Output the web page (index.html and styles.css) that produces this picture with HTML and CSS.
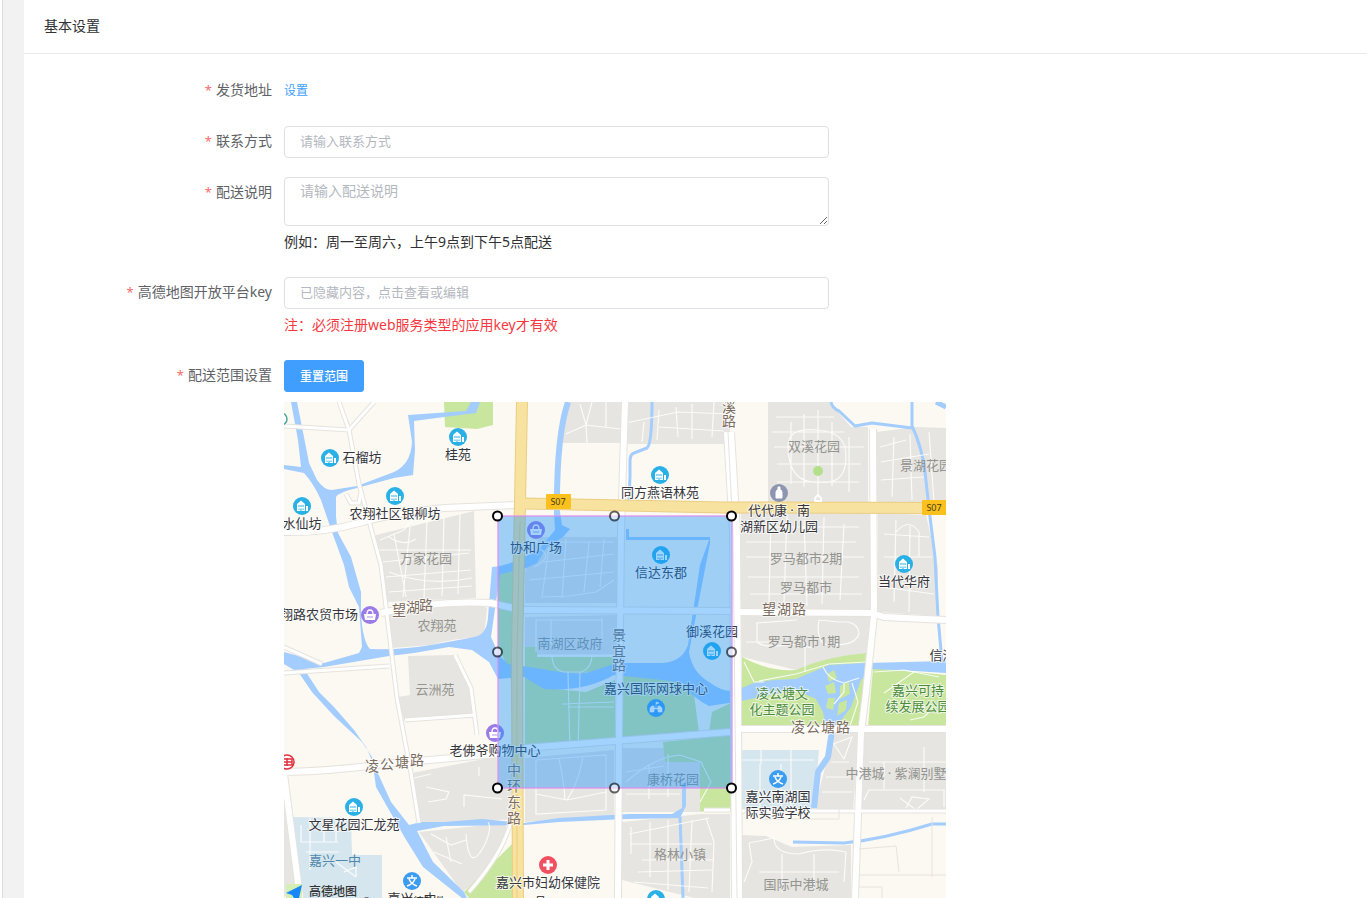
FILE: index.html
```html
<!DOCTYPE html>
<html lang="zh-CN">
    <head>
        <meta charset="utf-8">
        <meta name="viewport" content="width=device-width, initial-scale=1.0">
        <title>基本设置</title>
        <link rel="stylesheet" href="styles.css">
    </head>
    <body>
        <main class="card">
            <h1 class="card-header">基本设置</h1>
            <form class="form">
                <div class="form-item">
                    <span class="label" id="addr">发货地址</span>
                    <div class="content"><a class="link" href="#" aria-describedby="addr">设置</a></div>
                </div>
                <div class="form-item">
                    <label class="label" for="contact">联系方式</label>
                    <div class="content"><input class="input" id="contact" type="text" placeholder="请输入联系方式"></div>
                </div>
                <div class="form-item">
                    <label class="label" for="desc">配送说明</label>
                    <div class="content">
                        <textarea class="input textarea" id="desc" placeholder="请输入配送说明"></textarea>
                        <div class="tip">例如：周一至周六，上午9点到下午5点配送</div>
                    </div>
                </div>
                <div class="form-item">
                    <label class="label" for="key">高德地图开放平台key</label>
                    <div class="content">
                        <input class="input" id="key" type="text" placeholder="已隐藏内容，点击查看或编辑">
                        <div class="tip warn">注：必须注册web服务类型的应用key才有效</div>
                    </div>
                </div>
                <div class="form-item">
                    <label class="label" for="reset">配送范围设置</label>
                    <div class="content">
                        <button class="btn" id="reset" type="button">重置范围</button>
                        <div class="map">
<svg class="map-svg" viewBox="0 0 662 496" preserveAspectRatio="xMinYMin slice">
    <defs>
        <g id="house">
            <circle r="9" fill="#29b0e6"/>
            <path d="M-5 5V-2L-1-5.500L3-2V5ZM4 5V0H6V5Z" fill="#fff"/>
            <path d="M-3-1V1M-1-1V1M1-1V1M-3 2.500V4M-1 2.500V5M1 2.500V4" stroke="#29b0e6"/>
        </g>
        <g id="shop">
            <circle r="9" fill="#9b7be6"/>
            <path d="M-6-1H6L5 5H-5Z" fill="#fff"/>
            <path d="M-3-1Q-3-5 0-5Q3-5 3-1" fill="none" stroke="#fff" stroke-width="1.3"/>
            <path d="M-2 1V3M0 1V3M2 1V3" stroke="#9b7be6" stroke-width=".8"/>
        </g>
        <g id="school">
            <circle r="9" fill="#3c9cf0"/>
            <path d="M0-6V-3M-5-3H5M-3-2Q-1 3 5 5M3-2Q1 3-5 5" fill="none" stroke="#fff" stroke-width="1.5"/>
        </g>
    </defs>

    <!-- 小区 -->
    <g fill="#e6e5e1">
        <path d="M88 134L190 109L192 196L103 200Z"/>
        <path d="M103 213L150 203L192 200L203 206L200 235Q170 236 147 243L108 246Z"/>
        <path d="M124 254L170 253L182 276L192 311L120 319L114 295L126 293Z"/>
        <path d="M128 371L200 357L228 353V417L160 422L137 421Z"/>
        <path d="M135 430L222 421V440L205 470L178 490Z"/>
        <path d="M0 378L12 440L16 480L0 496Z"/>
        <path d="M284 0H338V41H278Z"/>
        <path d="M342 0H446V42H342Z"/>
        <path d="M256 135H333V201H241V170Z"/>
        <path d="M241 215L333 213V253H241Z"/>
        <path d="M241 356L330 348V414L241 420Z"/>
        <path d="M338 346H446V410H338Z"/>
        <path d="M338 420L417 412H446V496H410L338 478Z"/>
        <path d="M484 0H545L567 25H584V102H484Z"/>
        <path d="M592 30L632 25L662 26V101H592Z"/>
        <path d="M457 111H587V209H457Z"/>
        <path d="M594 111L642 113L654 165V214L594 210Z"/>
        <path d="M457 213H587L582 251L555 255L512 268L458 255Z"/>
        <path d="M550 331H575L569 408H530Z"/>
        <path d="M580 331H662V408H575Z"/>
        <path d="M458 433L482 434L508 445L567 443V496H458Z"/>
    </g>
    <!-- 学校 -->
    <g fill="#d6e6ee">
        <path d="M9 415L67 416L68 453H98V496H18Z"/>
        <path d="M458 348H535L530 408H458Z"/>
    </g>
    <!-- 绿地 -->
    <g fill="#c8e69d">
        <path d="M160 0H209V23L193 27L161 25Z"/>
        <path d="M214 170L229 163V270L222 262L214 243Z"/>
        <path d="M241 245H253V255H330V265L300 271H241Z"/>
        <path d="M241 275L260 286L302 290L331 278V339L241 349Z"/>
        <path d="M339 273Q370 271 393 280L410 292L415 331L339 335Z"/>
        <path d="M425 330L428 310L447 301V328Z"/>
        <path d="M379 340L447 333V409H416V360L381 360Z"/>
        <path d="M230 440L180 490L185 496H230Z"/>
        <path d="M458 255Q485 270 512 268Q540 255 582 251L577 325H458Z"/>
        <path d="M589 266L662 273V325H584Z"/>
    </g>
    <!-- 河流 -->
    <g fill="#a3ccff">
        <path d="M7 0H13L20 35L25 61L33 78Q40 88 48 88L73 84L110 70Q127 62 128 40L124 13L182 9L187 0H196L192 11L160 15L130 19L131 48L129 73L110 76L73 86Q55 90 52 95V115L54 131L67 155L77 190V213Q79 240 86 247Q120 248 147 243Q175 238 190 235Q203 233 204 215L208 165Q225 164 236 156L253 150L271 128L270 110H276L278 123L286 127L279 135L263 145L253 161L240 167L216 172L207 235L215 253L224 262Q245 265 258 267Q280 272 302 271L333 261H378Q398 260 404 243L416 163L425 138H342V127H345V135H426L426 141L405 250Q408 270 425 280Q438 290 450 289L470 281L490 278L512 277L545 263L582 261L662 259V271L630 269L589 267L577 278L567 305L552 325H542L539 310L532 297L512 288L485 293L458 299L425 304Q410 297 398 281L378 278L330 273Q300 290 260 287L240 275L214 277L205 260L188 248L165 245L130 251L105 254L40 265L20 267L35 290L50 305L70 328L82 345L97 378L107 400L125 423L137 420L160 420L198 417L240 421L275 416L345 412L388 412L398 406V382L402 380V404L396 416L342 417L275 420L240 423L160 424L133 429L149 460L180 490L183 496H178L139 465L121 436L92 385L88 355L78 340L50 314L28 290L15 271L0 262V250L40 261L75 251L78 245L75 205L65 185L60 163L48 130L37 98Q30 82 20 71L0 67V63L17 65L14 38Z"/>
    </g>
    <g fill="none" stroke="#a3ccff" stroke-linejoin="round">
        <path d="M284 0Q272 35 273 115" stroke-width="6"/>
        <path d="M368 0Q368 42 363 46L350 51Q346 52 346 60V75L345 98" stroke-width="3"/>
        <path d="M547 0Q548 6 555 9L571 24L588 21L628 26" stroke-width="3"/>
        <path d="M628 0V24Q638 45 641 70L646 115L651 155L654 215L658 260" stroke-width="3"/>
        <path d="M548 329L544 355L534 370L530 406" stroke-width="6"/>
        <path d="M509 440L560 441Q600 437 648 422L662 422" stroke-width="3"/>
        <path d="M396 415L399 496" stroke-width="3"/>
        <path d="M652 0L662 5" stroke-width="5"/>
    </g>
    <g fill="#c8e69d">
        <path d="M543 272L550 268L553 276L545 280ZM541 284L550 280L552 291L544 292ZM556 284L565 279L566 292L556 297ZM544 296L551 296L549 308L542 306ZM555 301L563 298L562 308L553 314Z"/>
    </g>
    <!-- 小区内部道路 -->
    <g fill="none" stroke="#fff" stroke-width="1.2" opacity=".85">
        <path d="M96 138L120 128L133 112M94 148H187M99 160L185 151M102 175L187 168M105 190L188 184M110 132L122 195M126 125L119 195M143 118L140 196M160 115L158 194M176 111L174 192M105 135Q120 145 132 137M105 170Q145 185 188 176"/>
        <path d="M308 0L302 23L282 32M296 2L302 23L337 27M302 23L303 41M322 0V25M342 21L394 10L446 12M360 20L358 40M375 8L373 38M392 5L394 35M408 2V37M430 0L428 35M375 25L440 29"/>
        <path d="M250 165Q270 155 256 147M258 140H330M260 160L330 152M245 178L330 170M258 195L265 145M278 196L282 137M300 190L305 140M316 185L320 137M258 195L285 194L312 190L330 178"/>
        <path d="M252 250V218H318M267 218V242M318 216V240M254 253H330M268 253Q268 268 280 270H298Q308 265 308 253M284 270L286 349M296 270L294 349M278 302L330 300M284 305H330"/>
        <path d="M252 358L322 353V408L252 412V358M275 357Q280 380 281 398M299 354Q295 380 283 398M252 392L283 398L322 390M342 380Q370 355 396 353L417 360L427 380L416 400M342 392H396M365 362V397M384 352V395M342 370L380 364"/>
        <path d="M345 432L425 416M346 442H428M358 458H430M354 470L428 468M350 480L424 486M347 425V452M366 420V475M384 418V488M408 418L405 490M422 416L430 440L428 490"/>
        <path d="M492 15H550M488 30H560M490 45H580M493 62H577M493 80H575M507 20V82M520 12V85M534 8V90M548 20V84M565 35V90M504 45Q503 25 534 28Q563 30 562 55Q562 84 534 80Q505 82 504 45M534 80V96M596 45L622 38M597 60L645 52M597 78L640 75M610 35L608 95M626 32L628 98M645 30L650 100"/>
        <path d="M464 125H575M462 140H572M462 155H580M464 175H575M466 192H578M487 115L485 200M503 112L500 200M520 118L523 204M540 115L538 202M560 122L556 198M465 130L490 118M600 132L645 135M600 155H648M598 185L650 192M612 118L610 200M626 124L625 210M612 130Q625 115 635 130V155"/>
        <path d="M462 240H488M472 221L513 218M473 221V240Q480 247 510 242L528 246M521 245V270M535 218L555 220Q574 218 575 232Q570 246 540 242Q532 235 535 218M460 260L470 280L480 280M475 279L512 272L545 262L582 260M539 265Q545 278 560 281L575 276M568 281L574 300L566 324M550 302L560 290L560 281M590 270L620 268L655 275M626 318L640 315L645 310M600 291L630 270"/>
        <path d="M549 342L568 335L560 357L550 342M547 360H565M542 375H568M538 390H568M585 360H662M580 398L585 388H660V405M622 406L628 395L645 397L632 408L616 396M600 360V387M640 345V390M458 358H530M477 348V362M507 348V405M476 362V408M497 362V408"/>
        <path d="M17 423V440H54M26 416V468M40 416V440M52 418V440M22 450H55M52 460L72 475M60 470L72 465V475M130 376L147 372M142 385L165 390L162 397L144 400M180 405V393L218 397M195 374V365M147 432L167 443L182 438M150 450L178 462M162 435L167 460M182 432Q185 475 202 440Q208 425 204 420M465 441L490 436Q490 452 515 452Q540 445 562 450L560 480M465 441L468 460L460 480M475 470H555M498 452V490M530 452V490"/>
    </g>

    <!-- 主要道路 -->
    <g fill="none" stroke="#e6e3de">
        <path stroke-width="5" d="M55 0L65 28L75 82L97 163L103 213L113 296L127 371L135 421M0 24L65 28L90 0M0 271L105 264M171 253L187 286L193 333M121 318L192 313M230 405Q225 445 185 490M0 245L38 262M62 92L67 101H75L77 90M458 409H662M446 408H420"/>
        <path stroke-width="8" d="M0 130Q40 131 75 121T160 106L233 103M97 211Q150 198 207 201L229 206M240 208L446 209M449 210L587 211L600 215L662 218M341 0L337 130L335 330L334 496M589 27L590 213L582 290L577 331L571 496M0 370Q50 369 100 362L213 352L241 346L331 339L446 330M457 327H662M0 372L16 496"/>
        <path stroke-width="12" d="M445 30L451 130L453 496"/>
    </g>
    <g fill="none" stroke="#fff">
        <path stroke-width="3" d="M55 0L65 28L75 82L97 163L103 213L113 296L127 371L135 421M0 24L65 28L90 0M0 271L105 264M171 253L187 286L193 333M121 318L192 313M230 405Q225 445 185 490M0 245L38 262M62 92L67 101H75L77 90M458 409H662M446 408H420"/>
        <path stroke-width="6" d="M0 130Q40 131 75 121T160 106L233 103M97 211Q150 198 207 201L229 206M240 208L446 209M449 210L587 211L600 215L662 218M341 0L337 130L335 330L334 496M589 27L590 213L582 290L577 331L571 496M0 370Q50 369 100 362L213 352L241 346L331 339L446 330M457 327H662M0 372L16 496"/>
        <path stroke-width="10" d="M445 30L451 130L453 496"/>
    </g>
    <path d="M444 30L449 130L453 496" fill="none" stroke="#e5e3df"/>
    <path d="M575 447L612 444L615 470M575 473H662M575 485H598V496M480 417H555V400M648 415V475" fill="none" stroke="#e8e4dc"/>

    <!-- 高速 S07 -->
    <g fill="none" stroke="#ebcd82" stroke-width="12">
        <path d="M238 0L236 100L233 250L234 496"/>
        <path d="M240 101.500L440 105.500L662 106"/>
    </g>
    <g fill="none" stroke="#f8e29f" stroke-width="10">
        <path d="M238 0L236 100L233 250L234 496"/>
        <path d="M238 101.500L440 105.500L662 106"/>
    </g>
    <path d="M236 120L233 250V496" fill="none" stroke="#ebcf80"/>
    <g class="shield">
        <rect x="262" y="92" width="25" height="15" rx="1"/>
        <text x="274" y="103">S07</text>
        <rect x="638" y="98" width="25" height="15" rx="1"/>
        <text x="650" y="109">S07</text>
    </g>

    <circle cx="534" cy="69" r="5" fill="#b4e08c"/>
    <path d="M531 99Q530 96 534 93Q538 96 537 99Z" fill="#e6e5e1" stroke="#fff" stroke-width="2"/>

    <!-- 兴趣点 -->
    <use href="#house" x="46" y="56"/>
    <use href="#house" x="174" y="35"/>
    <use href="#house" x="111" y="94"/>
    <use href="#house" x="18" y="104"/>
    <use href="#house" x="376" y="73"/>
    <use href="#house" x="377" y="153"/>
    <use href="#house" x="620" y="162"/>
    <use href="#house" x="428" y="249"/>
    <use href="#house" x="70" y="405"/>
    <use href="#house" x="372" y="497"/>
    <use href="#shop" x="86" y="213"/>
    <use href="#shop" x="252" y="128"/>
    <use href="#shop" x="211" y="331"/>
    <use href="#school" x="494" y="377"/>
    <use href="#school" x="128" y="479"/>
    <g transform="translate(372 306)">
        <circle r="9" fill="#3c9cf0"/>
        <path d="M-6 4V0L-4-2H-2V0H2V-2H4L6 0V4H2V1H-2V4ZM0-1V-6L3-5L0-4" fill="#fff" stroke="#fff" stroke-width=".6"/>
    </g>
    <g transform="translate(495 91)">
        <circle r="9" fill="#8d95b0"/>
        <path d="M-3 5V-1L-2-3H2L3-1V5ZM-1-6H1V-3H-1Z" fill="#fff" stroke="#fff"/>
    </g>
    <g transform="translate(264 463)">
        <circle r="9" fill="#f05060"/>
        <path d="M0-5V5M-5 0H5" stroke="#fff" stroke-width="3"/>
    </g>
    <g transform="translate(3 360)">
        <circle r="7" fill="#fff" stroke="#e0313f" stroke-width="1.500"/>
        <path d="M-5-3H5V3H-5ZM-5 0H5M0-4V4" fill="none" stroke="#e0313f" stroke-width="1.500"/>
    </g>
    <circle cx="-3" cy="17" r="6" fill="#fff" stroke="#4ba69b" stroke-width="1.500"/>

    <g class="area">
        <text x="530" y="49">双溪花园</text>
        <text x="642" y="68">景湖花园</text>
        <text x="142" y="161">万家花园</text>
        <text x="522" y="161">罗马都市2期</text>
        <text x="522" y="190">罗马都市</text>
        <text x="520" y="244">罗马都市1期</text>
        <text x="153" y="228">农翔苑</text>
        <text x="151" y="292">云洲苑</text>
        <text x="286" y="246">南湖区政府</text>
        <text x="389" y="382">康桥花园</text>
        <text x="396" y="457">格林小镇</text>
        <text x="512" y="487">国际中港城</text>
        <text x="612" y="376">中港城 · 紫澜别墅</text>
    </g>
    <g class="poi">
        <text x="78" y="60">石榴坊</text>
        <text x="174" y="57">桂苑</text>
        <text x="111" y="116">农翔社区银柳坊</text>
        <text x="18" y="126">水仙坊</text>
        <text x="376" y="95">同方燕语林苑</text>
        <text x="495" y="113">代代康 · 南</text>
        <text x="495" y="129">湖新区幼儿园</text>
        <text x="252" y="150">协和广场</text>
        <text x="377" y="175">信达东郡</text>
        <text x="620" y="184">当代华府</text>
        <text x="35" y="217">翔路农贸市场</text>
        <text x="428" y="234">御溪花园</text>
        <text x="372" y="291">嘉兴国际网球中心</text>
        <text x="211" y="353">老佛爷购物中心</text>
        <text x="665" y="258">信濮苑</text>
        <text x="70" y="427">文星花园汇龙苑</text>
        <text x="494" y="399">嘉兴南湖国</text>
        <text x="494" y="415">际实验学校</text>
        <text x="264" y="485">嘉兴市妇幼保健院</text>
        <text x="128" y="501">嘉兴 · 中</text>
    </g>
    <g class="park">
        <text x="498" y="296">凌公塘文</text>
        <text x="498" y="312">化主题公园</text>
        <text x="634" y="293">嘉兴可持</text>
        <text x="634" y="309">续发展公园</text>
    </g>
    <text class="campus" x="51" y="463">嘉兴一中</text>
    <g class="road">
        <text x="445" y="10">溪</text>
        <text x="445" y="24">路</text>
        <text x="115 129 142" y="213 210 208">望湖路</text>
        <text x="485 500 515" y="212">望湖路</text>
        <text x="88 103 118 133" y="369 367 365 363">凌公塘路</text>
        <text x="514 529 544 559" y="330">凌公塘路</text>
        <text x="335 335 335" y="238 254 268">景宜路</text>
        <text x="230 230 230 230" y="373 389 405 421">中环东路</text>
    </g>

    <!-- 配送范围 -->
    <rect x="214" y="114" width="234" height="272" fill="#1791fc" fill-opacity=".4" stroke="#dc8cf0" stroke-opacity=".6" stroke-width="2"/>
    <g fill="#fff" stroke="#000" stroke-width="2">
        <circle cx="213.500" cy="114" r="4.500"/>
        <circle cx="447.500" cy="114" r="4.500"/>
        <circle cx="213.500" cy="386" r="4.500"/>
        <circle cx="447.500" cy="386" r="4.500"/>
        <g opacity=".6">
            <circle cx="330.500" cy="114" r="4.500"/>
            <circle cx="330.500" cy="386" r="4.500"/>
            <circle cx="213.500" cy="250" r="4.500"/>
            <circle cx="447.500" cy="250" r="4.500"/>
        </g>
    </g>

    <!-- 高德 logo -->
    <path d="M2 482H18V496H2Z" fill="#d3efb5"/>
    <path d="M18 483L2 491L8 493L10 496H15Z" fill="#1787fb"/>
    <text class="logo" x="25" y="494">高德地图</text>
    <text class="copyright" x="78" y="504">© 2021 高德软件</text>
    <text class="copyright" x="180" y="504">GS(2019)6379号</text>
</svg>
                        </div>
                    </div>
                </div>
            </form>
        </main>
    </body>
</html>
```

FILE: styles.css
```css
*{
    box-sizing: border-box;
}
html{
    background: #fff;
}
body{
    margin: 0 0 0 2px;
    border-left: 1px solid #dcdcdc;
    padding-left: 21px;
    background: #f2f2f2;
    color: #303133;
    font-family: "Noto Sans", "Noto Sans CJK SC", sans-serif;
    font-size: 14px;
}
.card{
    background: #fff;
}
.card-header{
    margin: 0;
    padding: 15px 20px 17px;
    border-bottom: 1px solid #e8eaec;
    font-size: 14px;
    font-weight: normal;
    line-height: 21px;
}
.form{
    padding: 21px 20px 0;
}
.form-item{
    display: flex;
    margin-bottom: 19px;
}
.form-item:last-child{
    margin-bottom: 0;
}
.label{
    flex: none;
    width: 240px;
    padding-right: 12px;
    color: #606266;
    line-height: 30px;
    text-align: right;
}
.label::before{
    content: "*";
    margin-right: 4px;
    color: #f56c6c;
    font-size: 13px;
}
.content{
    flex: 1;
    min-width: 0;
    line-height: 32px;
}
.link{
    display: block;
    color: #409eff;
    font-size: 12px;
    line-height: 32px;
    text-decoration: none;
}
.input{
    display: block;
    width: 100%;
    max-width: 545px;
    height: 32px;
    padding: 0 15px 2px;
    border: 1px solid #dcdfe6;
    border-radius: 4px;
    background: #fff;
    color: #606266;
    font-family: inherit;
    font-size: 13px;
}
.input::placeholder{
    color: #b4b8c0;
}
.textarea{
    height: 49px;
    padding: 3px 15px;
    font-size: 14px;
    line-height: 20px;
    resize: vertical;
}
.tip{
    line-height: 32px;
}
.warn{
    color: #f5383f;
}
.btn{
    display: block;
    height: 32px;
    padding: 0 15px;
    border: 1px solid #409eff;
    border-radius: 3px;
    background: #409eff;
    color: #fff;
    font-family: inherit;
    font-size: 12px;
    font-weight: 500;
}

/* 地图 */
.map{
    max-width: 662px;
    margin-top: 10px;
    overflow: hidden;
    background: #fcf9f2;
}
.map-svg{
    display: block;
    width: 100%;
    font-family: "Noto Sans", "Noto Sans CJK SC", sans-serif;
    font-size: 13px;
}
.area, .poi, .park, .road, .shield{
    text-anchor: middle;
}
.area{
    fill: #93938f;
}
.poi{
    fill: #35353b;
}
.poi, .park, .road{
    paint-order: stroke;
    stroke: #fff;
    stroke-opacity: .7;
    stroke-width: 2px;
}
.park{
    fill: #4c8a3c;
}
.campus{
    fill: #5088ab;
    text-anchor: middle;
}
.road{
    fill: #7d6c60;
    font-size: 14px;
}
.shield{
    fill: #fac11e;
    font-family: "Noto Sans", sans-serif;
    font-size: 9px;
}
.shield text{
    fill: #4a3d10;
}
.logo{
    fill: #333;
    font-size: 12px;
    font-weight: 500;
}
.copyright{
    fill: #222;
    font-size: 11px;
}
```
